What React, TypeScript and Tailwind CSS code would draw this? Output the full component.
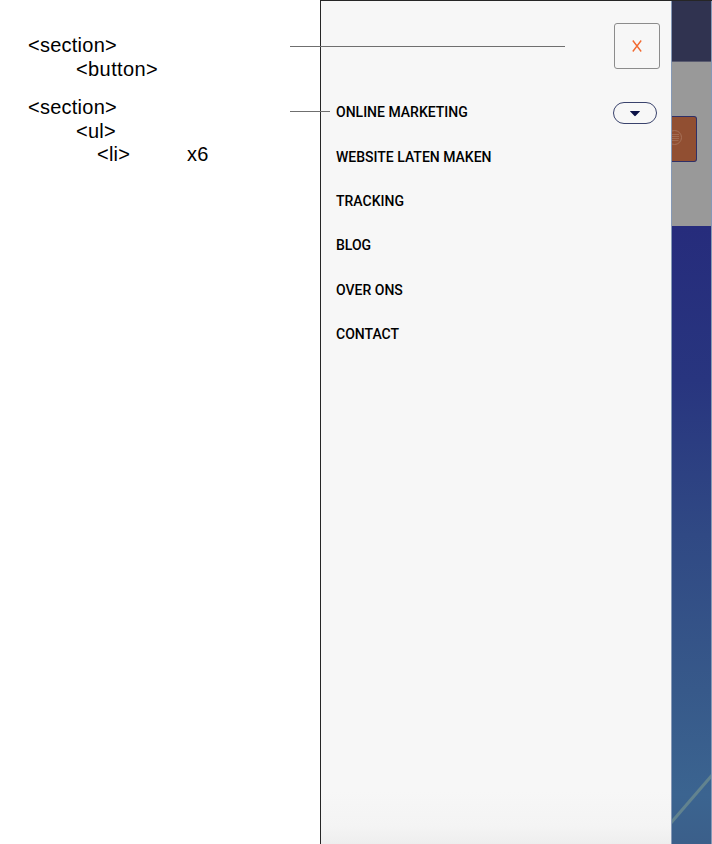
import React from "react";

const links = ["WEBSITE LATEN MAKEN", "TRACKING", "BLOG", "OVER ONS", "CONTACT"];

function Annotations() {
  return (
    <aside className="relative w-[320px] shrink-0 pl-[28px] pt-[33px] font-['Liberation_Sans',sans-serif] text-[20px] leading-[24px] tracking-[0.25px] text-black">
      <div>&lt;section&gt;</div>
      <div className="pl-[48px] tracking-[0.4px]">&lt;button&gt;</div>
      <div className="mt-[14px]">&lt;section&gt;</div>
      <div className="pl-[48px]">&lt;ul&gt;</div>
      <div className="-mt-px flex pl-[69px]">
        <span className="w-[90px]">&lt;li&gt;</span>
        <span>x6</span>
      </div>
      <div className="absolute left-[290px] top-[46px] z-10 h-px w-[275px] bg-[#6f6f6f]" />
      <div className="absolute left-[290px] top-[111px] z-10 h-px w-[40px] bg-[#6f6f6f]" />
    </aside>
  );
}

function MenuPanel() {
  return (
    <section className="flex w-[350px] shrink-0 flex-col bg-[linear-gradient(#f7f7f7_0px,#f7f7f7_790px,#f4f4f4_825px,#eeeeee_843px)] font-[Roboto,sans-serif]">
      <div className="flex justify-end pr-[11px] pt-[22px]">
        <button className="flex h-[46px] w-[46px] items-center justify-center rounded-[3px] border border-[#8c8c8c]">
          <svg width="10" height="12" viewBox="0 0 10 12" fill="none" stroke="#f26a31" strokeWidth="1.4">
            <path d="M.8.5 9.2 11.5M9.2.5.8 11.5" />
          </svg>
        </button>
      </div>
      <ul className="mt-[22px] pl-[15px] pr-[14px] text-[14px] font-medium text-black">
        <li className="flex h-[44.25px] items-center justify-between">
          <span className="-mt-px">ONLINE MARKETING</span>
          <button className="flex h-[22px] w-[44px] items-center justify-center rounded-full border border-[#39426c]">
            <svg className="mt-[2px]" width="12" height="6" viewBox="0 0 12 6" fill="#0b1247">
              <path d="M1.4 0h9.2q.8 0 .2.6L6.7 4.8q-.7.7-1.4 0L1.2.6Q.6 0 1.4 0Z" />
            </svg>
          </button>
        </li>
        {links.map((label) => (
          <li key={label} className="flex h-[44.25px] items-center">
            {label}
          </li>
        ))}
      </ul>
    </section>
  );
}

function PageBehind() {
  return (
    <div className="flex min-w-0 flex-1 flex-col overflow-hidden border-x border-[#8599b7]">
      <div className="h-[61px] shrink-0 border-b border-[#595b70] bg-[#303350]" />
      <div className="h-[164px] shrink-0 bg-[#999999] pt-[54px]">
        <div className="flex h-[46px] w-[25px] items-center overflow-hidden rounded-r-[3px] border border-l-0 border-[#2f3068] bg-[#914f32]">
          <svg className="-ml-[5px] -mt-[3px]" width="15" height="15" viewBox="0 0 15 15" fill="none" stroke="#a67158">
            <circle cx="7.5" cy="7.5" r="7" />
            <path d="M3 4.5h9M3 6.5h9M3 8.5h9M3.5 10.5h8" strokeWidth=".8" />
          </svg>
        </div>
      </div>
      <div className="flex flex-1 flex-col justify-end bg-[linear-gradient(#262c7c_0%,#28357f_25%,#304984_50%,#37598a_75%,#3b6490_92%,#3b5f8a_100%)]">
        <svg width="39" height="80" viewBox="0 0 39 80">
          <path d="M-2 60 41 10" stroke="#62838f" strokeWidth="3" />
        </svg>
      </div>
    </div>
  );
}

export default function App() {
  return (
    <main className="flex h-[844px] w-[712px] overflow-hidden bg-white">
      <Annotations />
      <div className="flex min-w-0 flex-1 border-l border-t border-[#262626]">
        <MenuPanel />
        <PageBehind />
      </div>
    </main>
  );
}
